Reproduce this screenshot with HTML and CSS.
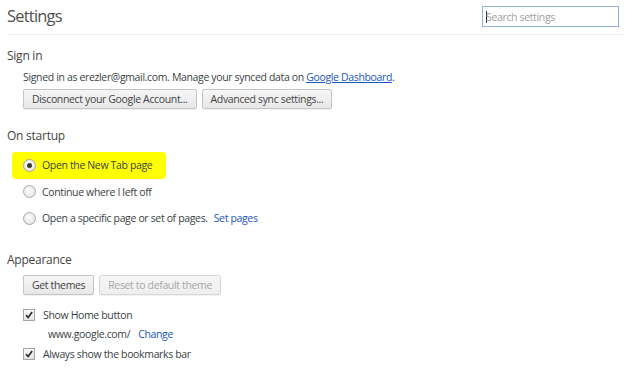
FILE: index.html
```html
<!DOCTYPE html>
<html>
<head>
<meta charset="utf-8">
<link rel="stylesheet" href="styles.css">
</head>
<body>
<div class="page">
  <header class="header">
    <h1 class="title">Settings</h1>
    <div class="search"><span class="caret"></span><span class="placeholder">Search settings</span></div>
  </header>

  <section class="section signin">
    <h2 class="section-title">Sign in</h2>
    <div class="content">
      <p class="line">Signed in as erezler@gmail.com. Manage your synced data on <a class="link underline" href="#">Google Dashboard</a>.</p>
      <div class="buttons">
        <button class="btn">Disconnect your Google Account...</button>
        <button class="btn">Advanced sync settings...</button>
      </div>
    </div>
  </section>

  <section class="section startup">
    <h2 class="section-title">On startup</h2>
    <div class="content radios">
      <div class="option highlight"><span class="radio checked"></span><span>Open the New Tab page</span></div>
      <div class="option"><span class="radio"></span><span>Continue where I left off</span></div>
      <div class="option"><span class="radio"></span><span>Open a specific page or set of pages.</span><a class="link setpages" href="#">Set pages</a></div>
    </div>
  </section>

  <section class="section appearance">
    <h2 class="section-title">Appearance</h2>
    <div class="content">
      <div class="buttons">
        <button class="btn">Get themes</button>
        <button class="btn disabled">Reset to default theme</button>
      </div>
      <div class="check-row"><span class="checkbox"><svg viewBox="0 0 12 12" width="12" height="12"><path d="M2.5 6.2 L5 9 L9.8 2.5" fill="none" stroke="#2b2b2b" stroke-width="2"/></svg></span><span>Show Home button</span></div>
      <div class="home-url"><span>www.google.com/</span><a class="link change" href="#">Change</a></div>
      <div class="check-row"><span class="checkbox"><svg viewBox="0 0 12 12" width="12" height="12"><path d="M2.5 6.2 L5 9 L9.8 2.5" fill="none" stroke="#2b2b2b" stroke-width="2"/></svg></span><span>Always show the bookmarks bar</span></div>
    </div>
  </section>
</div>
</body>
</html>
```
FILE: styles.css
```css
* { box-sizing: border-box; }
html, body { margin: 0; padding: 0; background: #fff; }
body {
  font-family: "Open Sans", "Noto Sans", sans-serif;
  font-size: 10.5px;
  letter-spacing: -0.35px;
  color: #3a3f45;
}
.page { padding: 0 0 0 7px; }

.header {
  display: flex;
  align-items: center;
  justify-content: space-between;
  height: 35px;
  width: 616px;
  border-bottom: 1px solid #ececec;
}
.title {
  margin: 0;
  font-weight: normal;
  font-size: 16.5px;
  letter-spacing: -0.8px;
  color: #505050;
  line-height: 22px;
  margin-top: -3px;
}
.search {
  width: 137px;
  height: 21px;
  margin: -1px 4px 0 0;
  border: 1px solid #8eb2dc;
  padding: 0 3px;
  display: flex;
  align-items: center;
  font-size: 10.5px;
}
.caret { width: 1px; height: 12px; background: #333; margin-right: -1px; }
.placeholder { color: #a0a0a0; }

.section-title {
  margin: 0;
  font-weight: normal;
  font-size: 12px;
  letter-spacing: -0.25px;
  line-height: 18px;
  color: #444;
}
.content { padding-left: 16px; }

.signin { padding-top: 12px; }
.line { margin: 4px 0 0 0; line-height: 16px; }

.buttons { display: flex; gap: 5px; margin-top: 4px; }
.btn {
  height: 20px;
  padding: 0 8px;
  font-family: inherit;
  font-size: 10.5px;
  letter-spacing: -0.35px;
  color: #444;
  border: 1px solid #c4c4c4;
  border-radius: 2px;
  background: linear-gradient(#f6f6f6, #e7e7e7);
  box-shadow: 0 1px 0 rgba(0,0,0,0.05);
}
.btn.disabled { color: #a8a8a8; border-color: #d7d7d7; background: linear-gradient(#f6f6f6, #eeeeee); }

.startup { padding-top: 18px; }
.radios { padding-left: 5px; margin-top: 7px; }
.option {
  display: flex;
  align-items: center;
  height: 26.5px;
  padding-left: 11px;
  gap: 6px;
}
.option.highlight {
  background: #ffff00;
  width: 154px;
  border-radius: 4px;
}
.radio {
  width: 13px;
  height: 13px;
  border-radius: 50%;
  border: 1px solid #a9a9a9;
  background: radial-gradient(circle at 45% 40%, #ffffff, #dcdcdc);
  position: relative;
  flex: none;
}
.radio.checked::after {
  content: "";
  position: absolute;
  left: 3px; top: 3px;
  width: 5px; height: 5px;
  border-radius: 50%;
  background: #3a3a3a;
}
.link { color: #1a55c2; text-decoration: none; }
.underline { text-decoration: underline; }
.setpages { margin-left: 0; }

.appearance { padding-top: 19px; }
.appearance .buttons { margin-top: 6px; }
.check-row {
  display: flex;
  align-items: center;
  gap: 8px;
  height: 20px;
}
.appearance .buttons + .check-row { margin-top: 10px; }
.checkbox {
  width: 12px;
  height: 12px;
  border: 1px solid #a4a4a4;
  background: linear-gradient(#fafafa, #e3e3e3);
  display: flex;
  align-items: center;
  justify-content: center;
  flex: none;
}
.checkbox svg { display: block; width: 10px; height: 10px; }
.home-url { padding-left: 25px; height: 19px; display: flex; align-items: center; }
.change { margin-left: 8px; }
```
